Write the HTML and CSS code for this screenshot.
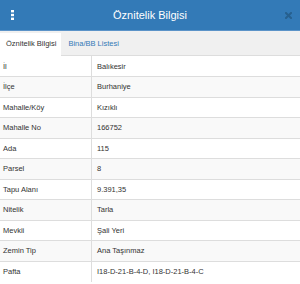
FILE: index.html
```
<!doctype html>
<html lang="tr">
<head>
	<meta charset="UTF-8">
	<title>Öznitelik Bilgisi</title>
	<link rel="stylesheet" href="styles.css">
</head>
<body>
	<div class="panel">
		<div class="panel-heading">
			<span class="menu">
				<svg width="3" height="10" viewBox="0 0 3 10"><rect x="0" y="0" width="3" height="2.4" fill="#fff"/><rect x="0" y="3.8" width="3" height="2.4" fill="#fff"/><rect x="0" y="7.6" width="3" height="2.4" fill="#fff"/></svg>
			</span>
			<h3 class="title">Öznitelik Bilgisi</h3>
			<span class="close">
				<svg width="7" height="7" viewBox="0 0 7 7"><path d="M1 1 L6 6 M6 1 L1 6" stroke="#27608f" stroke-width="2" stroke-linecap="square"/></svg>
			</span>
		</div>
		<ul class="tabs">
			<li class="active">Öznitelik Bilgisi</li>
			<li>Bina/BB Listesi</li>
		</ul>
		<table class="attr">
			<tr><td>İl</td><td>Balıkesir</td></tr>
			<tr><td>İlçe</td><td>Burhaniye</td></tr>
			<tr><td>Mahalle/Köy</td><td>Kızıklı</td></tr>
			<tr><td>Mahalle No</td><td>166752</td></tr>
			<tr><td>Ada</td><td>115</td></tr>
			<tr><td>Parsel</td><td>8</td></tr>
			<tr><td>Tapu Alanı</td><td>9.391,35</td></tr>
			<tr><td>Nitelik</td><td>Tarla</td></tr>
			<tr><td>Mevkii</td><td>Şali Yeri</td></tr>
			<tr><td>Zemin Tip</td><td>Ana Taşınmaz</td></tr>
			<tr><td>Pafta</td><td>I18-D-21-B-4-D, I18-D-21-B-4-C</td></tr>
		</table>
	</div>
</body>
</html>
```
FILE: styles.css
```
*{
	margin:0;
	padding:0;
}
ul,li{
	list-style:none;
}
body{
	background:#fff;
	font-family:"Liberation Sans",Arial,sans-serif;
	color:#333;
}
.panel{
	width:300px;
}
.panel-heading{
	height:30px;
	display:flex;
	align-items:center;
	background:#337ab7;
	border-bottom:1px solid #5b93c8;
}
.menu,.close{
	width:30px;
	display:flex;
	align-items:center;
}
.menu{
	padding-left:11px;
	box-sizing:border-box;
}
.close{
	justify-content:flex-end;
	padding-right:8px;
	box-sizing:border-box;
}
.title{
	flex:1;
	text-align:center;
	color:#fff;
	font-size:11px;
	font-weight:normal;
}
.tabs{
	height:24px;
	display:flex;
	align-items:flex-end;
	background:#f0f0f0;
	border-bottom:1px solid #ddd;
	font-size:7.5px;
}
.tabs li{
	height:22px;
	line-height:22px;
	padding:0 7px;
	color:#337ab7;
}
.tabs li.active{
	padding:0 5px 0 6px;
	background:#fff;
	color:#333;
	margin-bottom:-1px;
	height:23px;
}
.attr{
	width:100%;
	border-collapse:collapse;
	font-size:7.5px;
}
.attr tr{
	height:20.5px;
}
.attr tr:nth-child(even){
	background:#f9f9f9;
}
.attr td{
	border-top:1px solid #ddd;
	padding:0 5px;
	vertical-align:middle;
}
.attr td:first-child{
	width:83px;
	padding-left:3px;
	border-right:1px solid #ddd;
}
.attr tr:first-child td{
	border-top:0;
}
```
